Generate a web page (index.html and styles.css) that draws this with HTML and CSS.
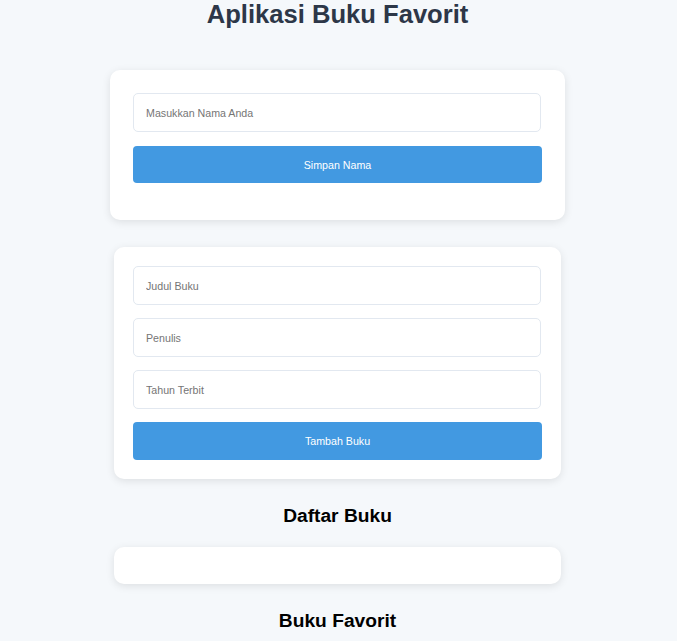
FILE: index.html
```html
<!DOCTYPE html>
<html lang="id">
<head>
<meta charset="utf-8">
<title>Aplikasi Buku Favorit</title>
<link rel="stylesheet" href="styles.css">
</head>
<body>
  <h1 class="title">Aplikasi Buku Favorit</h1>
  <div class="card card-name">
    <input class="field" type="text" placeholder="Masukkan Nama Anda">
    <button class="btn">Simpan Nama</button>
  </div>
  <div class="card card-book">
    <input class="field" type="text" placeholder="Judul Buku">
    <input class="field" type="text" placeholder="Penulis">
    <input class="field" type="text" placeholder="Tahun Terbit">
    <button class="btn">Tambah Buku</button>
  </div>
  <h2 class="section-title">Daftar Buku</h2>
  <div class="card card-list"></div>
  <h2 class="section-title">Buku Favorit</h2>
</body>
</html>
```

FILE: styles.css
```css
html, body {
  margin: 0;
  padding: 0;
}
body {
  background: #f5f8fb;
  font-family: "Liberation Sans", Arial, sans-serif;
  display: flex;
  flex-direction: column;
  align-items: center;
  padding-right: 2px;
}
.title {
  margin: 0 0 41px;
  font-size: 25.6px;
  font-weight: bold;
  color: #2d3748;
  text-align: center;
  line-height: 29px;
}
.card {
  background: #ffffff;
  border-radius: 10px;
  box-shadow: 0 2px 8px rgba(0, 0, 0, 0.1);
  display: flex;
  flex-direction: column;
  box-sizing: border-box;
}
.card-name {
  width: 455px;
  padding: 23px 23px 37px;
  gap: 14px;
  margin-bottom: 27px;
}
.card-book {
  width: 447px;
  padding: 19px;
  gap: 13px;
}
.card-list {
  width: 447px;
  height: 37px;
}
.field {
  box-sizing: border-box;
  width: 408px;
  height: 39px;
  padding: 0 12px;
  border: 1px solid #e2e8f0;
  border-radius: 5px;
  background: #ffffff;
  font-family: "Liberation Sans", Arial, sans-serif;
  font-size: 10.67px;
  color: #2d3748;
  outline: none;
}
.field::placeholder {
  color: #757575;
}
.btn {
  box-sizing: border-box;
  width: 409px;
  height: 37px;
  border: none;
  border-radius: 4px;
  background: #4299e1;
  color: #ffffff;
  font-family: "Liberation Sans", Arial, sans-serif;
  font-size: 10.67px;
  font-weight: 500;
  cursor: pointer;
}
.card-book .btn {
  height: 38px;
}
.section-title {
  margin: 26px 0 20px;
  font-size: 19.2px;
  font-weight: bold;
  color: #000000;
  line-height: 22px;
  text-align: center;
}
.section-title:last-child {
  margin-bottom: 0;
}
```
